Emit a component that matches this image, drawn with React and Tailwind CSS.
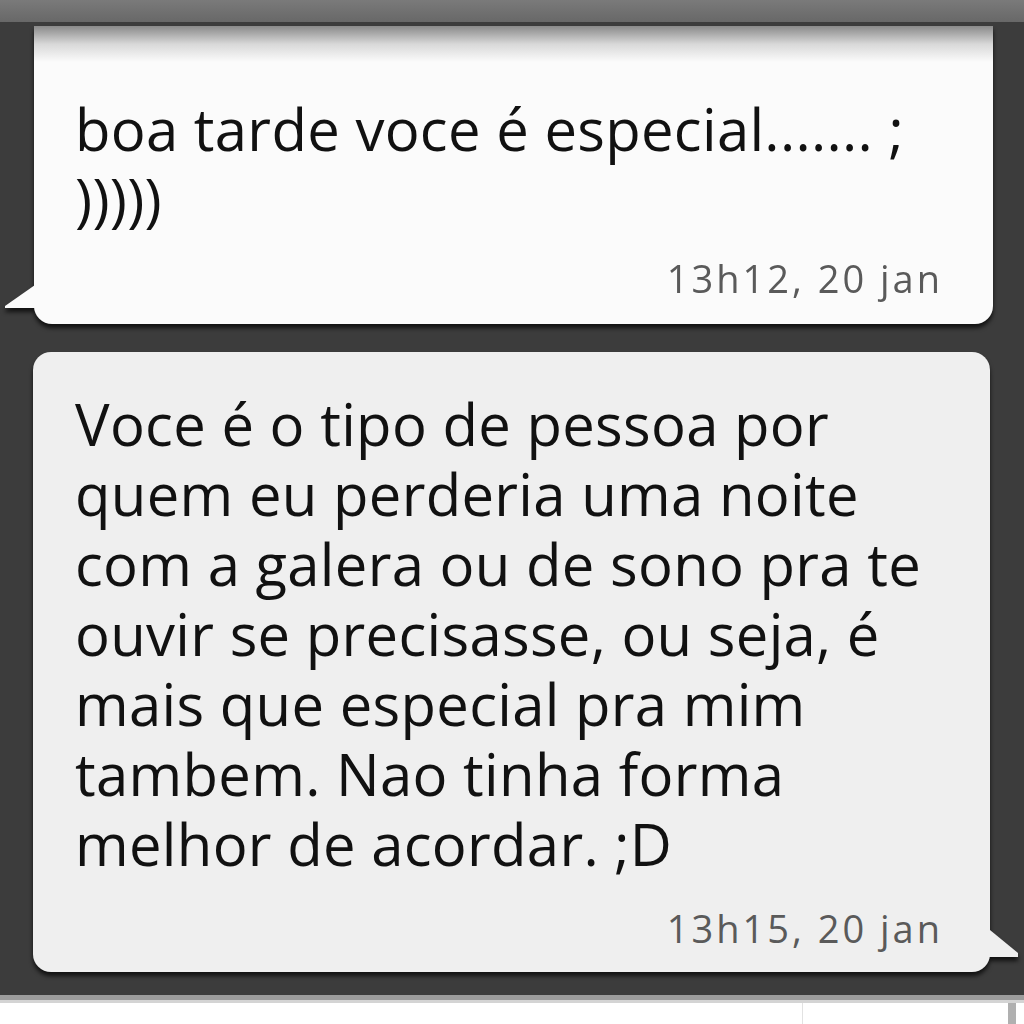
const FONT = { fontFamily: '"Open Sans", "Noto Sans", "DejaVu Sans", sans-serif' }

// left-pointing tail for the received bubble
function TailLeft() {
  return (
    <svg width="34" height="24" viewBox="0 0 34 24" className="absolute -left-[29px] top-[259px]" aria-hidden="true">
      <polygon points="30,0 0,21 0,23 34,23 34,0" fill="#fbfbfb" />
    </svg>
  )
}

// right-pointing tail for the second bubble
function TailRight() {
  return (
    <svg width="34" height="28" viewBox="0 0 34 28" className="absolute -right-[28px] top-[578px]" aria-hidden="true">
      <polygon points="0,0 6,0 34,23 34,27 0,27" fill="#efefef" />
    </svg>
  )
}

export default function App() {
  return (
    <div className="flex h-[1024px] w-[1024px] flex-col overflow-hidden bg-[#3c3c3c]" style={FONT}>
      {/* status / title strip */}
      <div className="h-[22px] shrink-0 bg-gradient-to-b from-[#7a7a7a] to-[#686868]" />

      {/* first message */}
      <div className="relative ml-[34px] mt-[4px] h-[298px] w-[959px] shrink-0 rounded-b-[18px] bg-[#fbfbfb] drop-shadow-[0_4px_2px_rgba(0,0,0,0.7)]">
        <div className="absolute inset-x-0 top-0 h-[36px] bg-gradient-to-b from-[#8a8a8a] via-[#d8d8d8] to-[#fbfbfb]" />
        <TailLeft />
        <div className="relative pl-[41px] pr-[50px] pt-[68px]">
          <p className="text-[58px] leading-[70px] tracking-[0.3px] text-[#111]">
            boa tarde voce é especial....... ;<br />)))))
          </p>
          <p className="mt-[22px] text-right text-[38px] leading-[44px] tracking-[3px] text-[#5a5a5a]">13h12, 20 jan</p>
        </div>
      </div>

      {/* second message */}
      <div className="relative ml-[33px] mt-[28px] h-[620px] w-[957px] shrink-0 rounded-[18px] bg-[#efefef] drop-shadow-[0_4px_2px_rgba(0,0,0,0.7)]">
        <TailRight />
        <div className="pl-[42px] pr-[47px] pt-[37px]">
          <p className="text-[58px] leading-[70px] tracking-[0.3px] text-[#111]">
            Voce é o tipo de pessoa por<br />
            quem eu perderia uma noite<br />
            com a galera ou de sono pra te<br />
            ouvir se precisasse, ou seja, é<br />
            mais que especial pra mim<br />
            tambem. Nao tinha forma<br />
            melhor de acordar. ;D
          </p>
          <p className="mt-[27px] text-right text-[38px] leading-[44px] tracking-[3px] text-[#5a5a5a]">13h15, 20 jan</p>
        </div>
      </div>

      {/* compose bar */}
      <div className="mt-[23px] flex flex-1 flex-col">
        <div className="h-[5px] bg-[#9c9c9c]" />
        <div className="h-[3px] bg-[#d4d4d4]" />
        <div className="flex flex-1 bg-white pl-[6px] pr-[8px]">
          <div className="w-[796px] bg-white" />
          <div className="w-px bg-[#e2e2e2]" />
          <div className="flex-1 bg-white" />
          <div className="w-[8px] bg-[#b0b0b0]" />
        </div>
      </div>
    </div>
  )
}
